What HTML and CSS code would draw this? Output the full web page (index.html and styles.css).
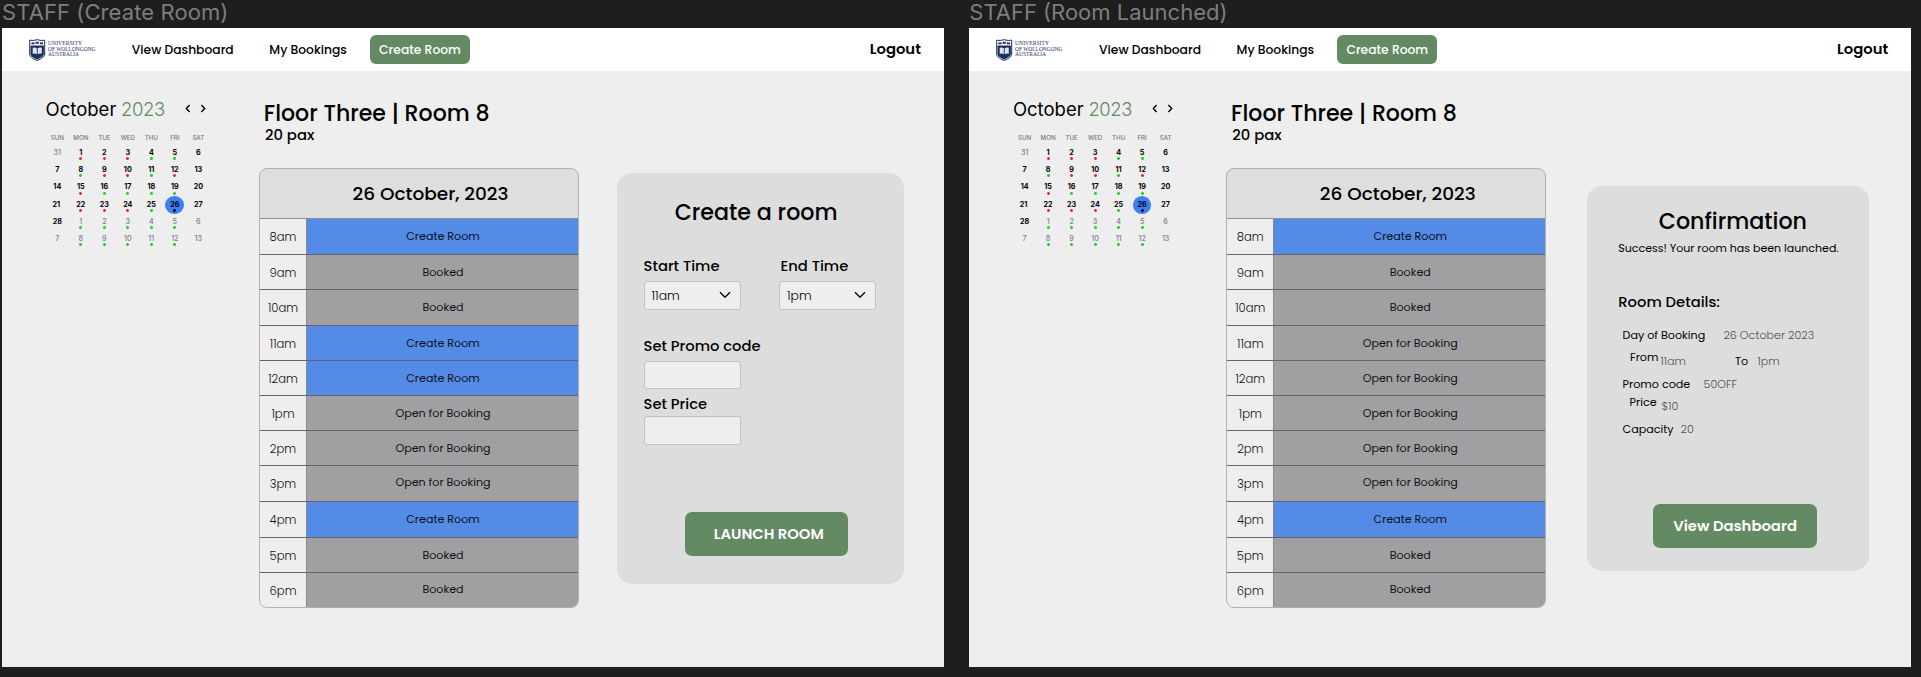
FILE: index.html
```html
<!DOCTYPE html>
<html lang="en">
<head>
<meta charset="utf-8">
<title>Staff room booking</title>
<link rel="stylesheet" href="styles.css">
</head>
<body>
<svg class="defs" width="0" height="0" aria-hidden="true">
  <symbol id="shield" viewBox="0 0 17 24">
    <path fill="#fff" stroke="#1c2f5c" stroke-width="1" d="M.7 1.200Q4 2 8.200.7 12.500 2 15.700 1.200V15q0 3.500-7.500 6.500Q.7 18.500.7 15Z"/>
    <path fill="#1c2f5c" d="M1.500 6.500h13.400V15q0 2.500-6.700 5.600Q1.500 17.500 1.500 15Z"/>
    <path fill="#1c2f5c" d="M2.200 5.200l.6-2.300 1.200.9 1.200-.9.5 2.300zM6.300 4.700l.7-2.400 1.200.9 1.200-.9.7 2.400zM10.700 5.200l.5-2.300 1.200.9 1.200-.9.6 2.300z"/>
    <path fill="#dfe4ee" d="M3.700 8.700q2.500-.6 4.100.5v6q-1.800-1-4.100-.4zM8.700 9.200q1.700-1.100 4.100-.5v6.100q-2.300-.6-4.100.4z"/>
  </symbol>
  <symbol id="prev" viewBox="0 0 6 9"><path d="M4.600 1 1.300 4.500l3.300 3.500" fill="none" stroke="#000" stroke-width="1.400"/></symbol>
  <symbol id="next" viewBox="0 0 6 9"><path d="M1.400 1l3.300 3.500L1.400 8" fill="none" stroke="#000" stroke-width="1.400"/></symbol>
  <symbol id="down" viewBox="0 0 12 8"><path d="M1 1.200 6 6.300l5-5.100" fill="none" stroke="#111" stroke-width="1.500"/></symbol>
</svg>

<div class="canvas">
  <section class="frame">
    <div class="frame-name">STAFF (Create Room)</div>
    <div class="screen">
      <header class="topbar">
        <svg class="logo" viewBox="0 0 68 24"><use href="#shield" width="17" height="24"/><text x="19" y="6.300" textLength="34" lengthAdjust="spacingAndGlyphs">UNIVERSITY</text><text x="19" y="11.500" textLength="47.500" lengthAdjust="spacingAndGlyphs">OF WOLLONGONG</text><text x="19" y="16.700" textLength="31" lengthAdjust="spacingAndGlyphs">AUSTRALIA</text></svg>
        <a class="nav-dash">View Dashboard</a>
        <a class="nav-book">My Bookings</a>
        <a class="nav-create">Create Room</a>
        <a class="logout">Logout</a>
      </header>
      <main class="content">
        <aside class="calendar">
          <div class="cal-title"><span class="month">October</span><span class="year">2023</span><svg class="arrow"><use href="#prev"/></svg><svg class="arrow"><use href="#next"/></svg></div>
          <div class="weekdays"><span>SUN</span><span>MON</span><span>TUE</span><span>WED</span><span>THU</span><span>FRI</span><span>SAT</span></div>
          <div class="days">
            <span class="out">31</span><span class="red">1</span><span class="red">2</span><span class="red">3</span><span class="green">4</span><span class="green">5</span><span>6</span>
            <span>7</span><span class="green">8</span><span class="red">9</span><span class="red">10</span><span class="green">11</span><span class="red">12</span><span>13</span>
            <span>14</span><span class="red">15</span><span class="green">16</span><span class="green">17</span><span class="green">18</span><span class="green">19</span><span>20</span>
            <span class="nudge">21</span><span class="red">22</span><span class="red">23</span><span class="red">24</span><span class="green">25</span><span class="today">26</span><span>27</span>
            <span>28</span><span class="out green">1</span><span class="out green">2</span><span class="out green">3</span><span class="out green">4</span><span class="out green">5</span><span class="out">6</span>
            <span class="out">7</span><span class="out green">8</span><span class="out green">9</span><span class="out green">10</span><span class="out green">11</span><span class="out green">12</span><span class="out">13</span>
          </div>
        </aside>
        <section class="room">
          <h1>Floor Three | Room 8</h1>
          <p class="pax">20 pax</p>
          <div class="schedule">
            <div class="date">26 October, 2023</div>
            <div class="slot tall"><span class="time">8am</span><span class="state create">Create Room</span></div>
            <div class="slot"><span class="time">9am</span><span class="state">Booked</span></div>
            <div class="slot tall"><span class="time">10am</span><span class="state">Booked</span></div>
            <div class="slot"><span class="time">11am</span><span class="state create">Create Room</span></div>
            <div class="slot"><span class="time">12am</span><span class="state create">Create Room</span></div>
            <div class="slot"><span class="time">1pm</span><span class="state">Open for Booking</span></div>
            <div class="slot"><span class="time">2pm</span><span class="state">Open for Booking</span></div>
            <div class="slot tall"><span class="time">3pm</span><span class="state high">Open for Booking</span></div>
            <div class="slot tall"><span class="time">4pm</span><span class="state create">Create Room</span></div>
            <div class="slot"><span class="time">5pm</span><span class="state">Booked</span></div>
            <div class="slot"><span class="time">6pm</span><span class="state high">Booked</span></div>
          </div>
        </section>
        <section class="card form-card">
          <h2>Create a room</h2>
          <div class="times">
            <div class="field"><span class="label">Start Time</span><div class="box">11am<svg class="chevron"><use href="#down"/></svg></div></div>
            <div class="field"><span class="label end">End Time</span><div class="box">1pm<svg class="chevron"><use href="#down"/></svg></div></div>
          </div>
          <div class="field promo"><span class="label">Set Promo code</span><div class="box"></div></div>
          <div class="field price"><span class="label">Set Price</span><div class="box"></div></div>
          <a class="button launch">LAUNCH ROOM</a>
        </section>
      </main>
    </div>
  </section>

  <section class="frame">
    <div class="frame-name launched">STAFF (Room Launched)</div>
    <div class="screen">
      <header class="topbar">
        <svg class="logo" viewBox="0 0 68 24"><use href="#shield" width="17" height="24"/><text x="19" y="6.300" textLength="34" lengthAdjust="spacingAndGlyphs">UNIVERSITY</text><text x="19" y="11.500" textLength="47.500" lengthAdjust="spacingAndGlyphs">OF WOLLONGONG</text><text x="19" y="16.700" textLength="31" lengthAdjust="spacingAndGlyphs">AUSTRALIA</text></svg>
        <a class="nav-dash">View Dashboard</a>
        <a class="nav-book">My Bookings</a>
        <a class="nav-create">Create Room</a>
        <a class="logout">Logout</a>
      </header>
      <main class="content">
        <aside class="calendar">
          <div class="cal-title"><span class="month">October</span><span class="year">2023</span><svg class="arrow"><use href="#prev"/></svg><svg class="arrow"><use href="#next"/></svg></div>
          <div class="weekdays"><span>SUN</span><span>MON</span><span>TUE</span><span>WED</span><span>THU</span><span>FRI</span><span>SAT</span></div>
          <div class="days">
            <span class="out">31</span><span class="red">1</span><span class="red">2</span><span class="red">3</span><span class="green">4</span><span class="green">5</span><span>6</span>
            <span>7</span><span class="green">8</span><span class="red">9</span><span class="red">10</span><span class="green">11</span><span class="red">12</span><span>13</span>
            <span>14</span><span class="red">15</span><span class="green">16</span><span class="green">17</span><span class="green">18</span><span class="green">19</span><span>20</span>
            <span class="nudge">21</span><span class="red">22</span><span class="red">23</span><span class="red">24</span><span class="green">25</span><span class="today">26</span><span>27</span>
            <span>28</span><span class="out green">1</span><span class="out green">2</span><span class="out green">3</span><span class="out green">4</span><span class="out green">5</span><span class="out">6</span>
            <span class="out">7</span><span class="out green">8</span><span class="out green">9</span><span class="out green">10</span><span class="out green">11</span><span class="out green">12</span><span class="out">13</span>
          </div>
        </aside>
        <section class="room">
          <h1>Floor Three | Room 8</h1>
          <p class="pax">20 pax</p>
          <div class="schedule">
            <div class="date">26 October, 2023</div>
            <div class="slot tall"><span class="time">8am</span><span class="state create">Create Room</span></div>
            <div class="slot"><span class="time">9am</span><span class="state">Booked</span></div>
            <div class="slot tall"><span class="time">10am</span><span class="state">Booked</span></div>
            <div class="slot"><span class="time">11am</span><span class="state">Open for Booking</span></div>
            <div class="slot"><span class="time">12am</span><span class="state">Open for Booking</span></div>
            <div class="slot"><span class="time">1pm</span><span class="state">Open for Booking</span></div>
            <div class="slot"><span class="time">2pm</span><span class="state">Open for Booking</span></div>
            <div class="slot tall"><span class="time">3pm</span><span class="state high">Open for Booking</span></div>
            <div class="slot tall"><span class="time">4pm</span><span class="state create">Create Room</span></div>
            <div class="slot"><span class="time">5pm</span><span class="state">Booked</span></div>
            <div class="slot"><span class="time">6pm</span><span class="state high">Booked</span></div>
          </div>
        </section>
        <section class="card confirm-card">
          <h2>Confirmation</h2>
          <p class="success">Success! Your room has been launched.</p>
          <h3>Room Details:</h3>
          <dl class="details">
            <div class="row day"><dt>Day of Booking</dt><dd>26 October 2023</dd></div>
            <div class="row span"><dt class="raised">From</dt><dd>11am</dd><dt class="to">To</dt><dd>1pm</dd></div>
            <div class="row code"><dt>Promo code</dt><dd>50OFF</dd></div>
            <div class="row cost"><dt class="raised">Price</dt><dd>$10</dd></div>
            <div class="row cap"><dt>Capacity</dt><dd>20</dd></div>
          </dl>
          <a class="button dash">View Dashboard</a>
        </section>
      </main>
    </div>
  </section>
</div>
</body>
</html>
```
FILE: styles.css
```css
* { box-sizing: border-box; }
body { margin: 0; background: #1e1e1e; font-family: Poppins, Inter, "Liberation Sans", sans-serif; color: #000; overflow: hidden; }
h1, h2, h3, p, dl, dd, dt { margin: 0; font-weight: 500; }
.defs { position: absolute; }
.canvas { display: flex; gap: 25.300px; padding-left: 2px; height: 677px; }
.frame { width: 941.700px; margin-right: .3px; flex: none; }
.frame-name { height: 28px; font: 400 22px/25px Inter, sans-serif; color: #7d7d7d; white-space: nowrap; letter-spacing: .09px; }
.frame-name.launched { letter-spacing: 0; }
.screen { height: 639px; background: #eee; }

/* Top bar */
.topbar { display: flex; align-items: center; height: 43px; background: #fff; font-size: 12.300px; font-weight: 500; white-space: nowrap; }
.logo { width: 68px; height: 24px; margin: 2px 0 0 26.500px; flex: none; font: 400 5.500px "Liberation Serif", serif; fill: #1c2f5c; }
.nav-dash { width: 137.500px; margin-left: 35.300px; }
.nav-book { width: 100.700px; }
.nav-create { width: 100px; height: 29px; line-height: 29px; border-radius: 6px; background: #648a64; color: #fff; text-align: center; }
.logout { margin: -1px 22.800px 0 auto; font-size: 14.800px; font-weight: 600; }

.content { display: flex; align-items: flex-start; }

/* Calendar */
.calendar { width: 257px; padding: 25.500px 0 0 43.600px; font-family: Inter, sans-serif; }
.cal-title { display: flex; align-items: center; height: 24px; font-size: 18.500px; }
.month { width: 75.500px; font-weight: 430; }
.year { width: 64px; color: #648a64; font-weight: 320; letter-spacing: -.45px; }
.arrow { width: 6px; height: 9px; margin-right: 9px; }
.weekdays, .days { display: grid; grid-template-columns: repeat(7, 23.500px); text-align: center; }
.weekdays { margin: 11.500px 0 4px; font-size: 6.200px; line-height: 12px; color: #77777f; font-weight: 500; }
.days { grid-auto-rows: 17.200px; font-size: 7.200px; line-height: 9px; font-weight: 700; }
.days span { position: relative; z-index: 0; }
.days .out { color: #7e7e84; font-weight: 500; }
.days .nudge { left: -1px; }
.red::after, .green::after, .today::after { content: ""; display: block; width: 3px; height: 3px; margin: .3px auto 0; background: radial-gradient(circle, #ec2b2b 1.100px, transparent 1.700px); }
.green::after { background: radial-gradient(circle, #25cc25 1.100px, transparent 1.700px); }
.today::after { background: radial-gradient(circle, #000 1.100px, transparent 1.700px); }
.today::before { content: ""; position: absolute; z-index: -1; left: 2.400px; top: -3.800px; width: 18.700px; height: 18.300px; border-radius: 50%; background: #3d7ff5; }

/* Schedule */
.room { width: 320px; padding-top: 29px; }
.room h1 { padding-left: 4.800px; font-size: 22.100px; line-height: 28px; white-space: nowrap; }
.pax { padding-left: 6px; font-size: 14.800px; line-height: 16px; margin-top: -1px; }
.schedule { margin-top: 25px; border: 1px solid #b0b0b1; border-radius: 8px; overflow: hidden; background: #dedede; }
.date { height: 50px; padding: 2px 0 0 23px; line-height: 46px; border-bottom: 1px solid #8f8f90; text-align: center; font-size: 18.500px; font-weight: 500; }
.slot { display: flex; height: 35px; line-height: 34px; border-bottom: 1px solid #66666a; }
.slot.tall { height: 36px; line-height: 35px; }
.slot:last-child { height: 34px; border-bottom: 0; }
.time { width: 47px; border-right: 1px solid #8a8a8c; background: #eee; text-align: center; font-size: 11.600px; font-weight: 300; color: #111; padding-top: 1px; }
.state { flex: 1; padding-left: 1px; background: #a0a0a2; text-align: center; font-size: 11.120px; color: #111; }
.state.create { background: #548be6; color: #0a1020; }
.state.high { line-height: 32px; }

/* Cards */
.card { display: flex; flex-direction: column; background: #ddd; border-radius: 15px; }
.card h2 { font-size: 22.200px; line-height: 28px; white-space: nowrap; }
.form-card { width: 287px; height: 410.500px; margin: 102.300px 0 0 38px; padding: 25.600px 0 0 26.500px; }
.form-card h2 { padding-left: 31.200px; }
.times { display: flex; gap: 38.500px; margin-top: 31.200px; }
.field { width: 97px; }
.label { display: block; white-space: nowrap; font-size: 14.750px; font-weight: 500; line-height: 16px; }
.label.end { padding-left: 1.500px; }
.box { display: flex; align-items: center; justify-content: space-between; height: 28.500px; margin-top: 7.300px; padding: 0 9px 0 7px; border: 1px solid #c2c2c2; border-radius: 3px; background: #eee; font-size: 12.400px; font-weight: 300; }
.chevron { width: 12px; height: 8px; margin-top: -1px; }
.promo { margin-top: 27.800px; }
.price { margin-top: 6.800px; }
.price .box { margin-top: 4.200px; }
.button { display: block; width: 163.500px; height: 44.500px; line-height: 44.500px; border-radius: 7px; background: #648a64; color: #fff; text-align: center; font-size: 14.800px; font-weight: 600; }
.launch { margin: 67px 0 0 41px; padding-left: 5px; }

.confirm-card { width: 281.500px; height: 385.500px; margin: 114.500px 0 0 41px; padding: 22.700px 0 0 31px; }
.confirm-card h2 { padding-left: 40.500px; }
.success { margin-top: 4.200px; font-size: 11.020px; line-height: 16px; font-weight: 400; white-space: nowrap; }
.confirm-card h3 { margin-top: 37.400px; font-size: 14.750px; line-height: 16px; }
.details { padding-left: 4.300px; font-size: 11.150px; line-height: 14px; }
.row { display: flex; white-space: nowrap; }
.row dt { font-weight: 400; }
.row dd { font-weight: 300; color: #505050; }
.day { margin-top: 17.800px; }
.day dt { width: 100.800px; }
.span { margin-top: 12px; padding-left: 7.500px; }
.span .raised { width: 30.500px; margin-top: -4px; }
.span dd { width: 74.500px; }
.span .to { width: 22.500px; }
.code { margin-top: 9px; }
.code dt { width: 81px; }
.cost { margin-top: 8.500px; padding-left: 7px; }
.cost .raised { width: 32px; margin-top: -4px; }
.cap { margin-top: 9px; }
.cap dt { width: 58px; }
.dash { margin: 67.500px 0 0 35px; }
```
